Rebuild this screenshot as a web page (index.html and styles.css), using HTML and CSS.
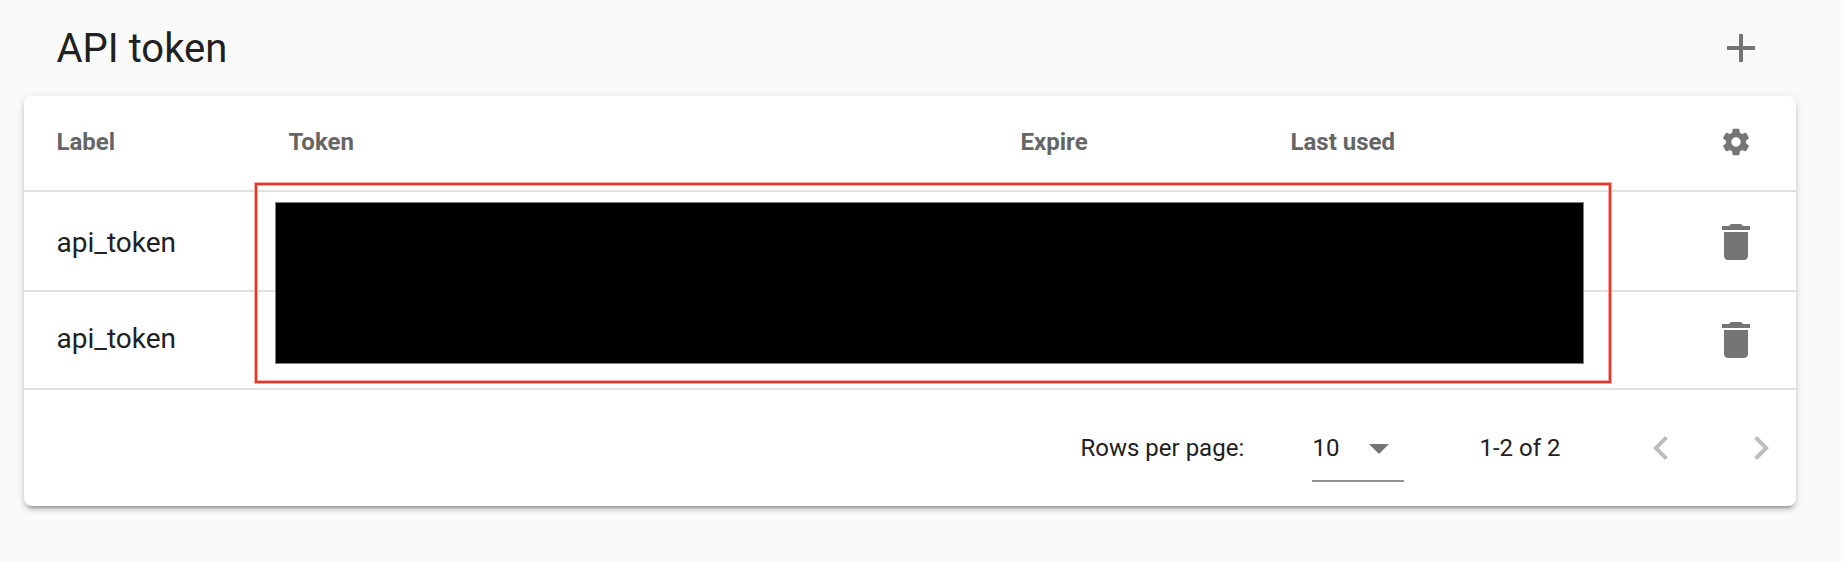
FILE: index.html
```html
<!DOCTYPE html>
<html lang="en">
<head>
<meta charset="utf-8">
<title>API token</title>
<link rel="stylesheet" href="styles.css">
</head>
<body>
<header class="toolbar">
  <h1 class="title">API token</h1>
  <svg class="icon" viewBox="0 0 24 24"><path d="M19 13h-6v6h-2v-6H5v-2h6V5h2v6h6v2z"/></svg>
</header>
<main class="card">
  <div class="row head">
    <span>Label</span><span>Token</span><span>Expire</span><span>Last used</span>
    <svg class="icon gear" viewBox="0 0 24 24"><path d="M12 15.5A3.5 3.5 0 0 1 8.5 12 3.5 3.5 0 0 1 12 8.5a3.5 3.5 0 0 1 3.5 3.5 3.5 3.5 0 0 1-3.5 3.5m7.430-2.530c.04-.32.07-.64.07-.97 0-.33-.03-.66-.07-1l2.110-1.630c.19-.15.24-.42.12-.64l-2-3.460c-.12-.22-.39-.31-.61-.22l-2.490 1c-.52-.39-1.060-.73-1.690-.98l-.37-2.650A.506.506 0 0 0 14 2h-4c-.25 0-.46.18-.5.42l-.37 2.650c-.63.25-1.170.59-1.690.98l-2.490-1c-.22-.09-.49 0-.61.22l-2 3.460c-.13.22-.07.49.12.64L4.570 11c-.04.34-.07.67-.07 1 0 .33.03.65.07.97l-2.110 1.660c-.19.15-.25.42-.12.64l2 3.460c.12.22.39.3.61.22l2.490-1.010c.52.4 1.060.74 1.690.99l.37 2.650c.04.24.25.42.5.42h4c.25 0 .46-.18.5-.42l.37-2.650c.63-.26 1.170-.59 1.690-.99l2.490 1.010c.22.08.49 0 .61-.22l2-3.460c.12-.22.07-.49-.12-.64l-2.110-1.660z"/></svg>
  </div>
  <div class="row first">
    <span>api_token</span>
    <svg class="icon" viewBox="0 0 24 24"><path d="M6 19c0 1.100.9 2 2 2h8c1.100 0 2-.9 2-2V7H6v12zM19 4h-3.500l-1-1h-5l-1 1H5v2h14V4z"/></svg>
  </div>
  <div class="row second">
    <span>api_token</span>
    <svg class="icon" viewBox="0 0 24 24"><path d="M6 19c0 1.100.9 2 2 2h8c1.100 0 2-.9 2-2V7H6v12zM19 4h-3.500l-1-1h-5l-1 1H5v2h14V4z"/></svg>
  </div>
  <footer class="paginator">
    <span class="per-page">Rows per page:</span>
    <div class="select"><span>10</span><i class="arrow"></i></div>
    <span class="range">1-2 of 2</span>
    <svg class="icon prev" viewBox="0 0 24 24"><path d="M15.410 7.410L14 6l-6 6 6 6 1.410-1.410L10.830 12z"/></svg>
    <svg class="icon next" viewBox="0 0 24 24"><path d="M10 6L8.590 7.410 13.170 12l-4.580 4.590L10 18l6-6z"/></svg>
  </footer>
  <div class="highlight"></div>
  <div class="redaction"></div>
</main>
</body>
</html>
```
FILE: styles.css
```css
* {
  box-sizing: border-box;
}

body {
  margin: 0;
  height: 562px;
  overflow: hidden;
  background: #fafafa;
  color: #212121;
  font-family: Roboto, sans-serif;
}

.toolbar {
  display: flex;
  align-items: center;
  justify-content: space-between;
  height: 96px;
  padding: 0 79.5px 0 56.5px;
}

.title {
  margin: 2px 0 0;
  font-size: 40px;
  font-weight: 400;
  line-height: 48px;
}

.icon {
  display: block;
  flex: none;
  width: 48px;
  height: 48px;
  fill: #757575;
}

.card {
  position: relative;
  width: 1772px;
  height: 410px;
  margin-left: 24px;
  border-radius: 8px;
  background: #fff;
  box-shadow: 0 6px 2px -4px rgba(0, 0, 0, .2), 0 4px 4px rgba(0, 0, 0, .14), 0 2px 10px rgba(0, 0, 0, .12);
}

.row {
  display: grid;
  grid-template-columns: 232px 732px 270px 1fr 48px;
  align-items: center;
  height: 98px;
  padding: 0 36px 0 32.5px;
  border-bottom: 2px solid #e0e0e0;
  font-size: 28px;
  line-height: 32px;
}

.row .icon {
  grid-column: 5;
  justify-self: center;
}

.head {
  height: 96px;
  padding-bottom: 2px;
  color: #666;
  font-size: 24px;
  font-weight: 700;
}

.row .gear {
  width: 32px;
  height: 32px;
}

.first {
  height: 100px;
  padding-top: 2px;
}

.first span {
  margin-top: 2px;
}

.second span {
  margin-top: -3px;
}

.paginator {
  display: flex;
  align-items: center;
  height: 116px;
  padding-left: 1056.5px;
  font-size: 24px;
  line-height: 28px;
}

.per-page {
  width: 231.5px;
}

.select {
  display: flex;
  align-items: center;
  justify-content: space-between;
  align-self: flex-start;
  width: 92px;
  height: 92px;
  padding: 26px 15px 0 .5px;
  border-bottom: 2px solid #949494;
}

.arrow {
  margin-top: 1px;
  border: 10px solid transparent;
  border-top-color: #757575;
  border-bottom: 0;
}

.range {
  width: 157px;
  margin-left: 75.5px;
}

.paginator .icon {
  fill: #bdbdbd;
}

.next {
  margin-left: 52px;
}

.highlight {
  position: absolute;
  top: 87px;
  left: 231px;
  width: 1356px;
  height: 200px;
  border: 2px solid #e0392b;
  box-shadow: 0 0 0 1px #ffaaa0, inset 0 0 0 1px #ffaaa0;
}

.redaction {
  position: absolute;
  top: 106px;
  left: 251px;
  width: 1309px;
  height: 162px;
  border: 1px solid #808080;
  background: #000;
}
```
